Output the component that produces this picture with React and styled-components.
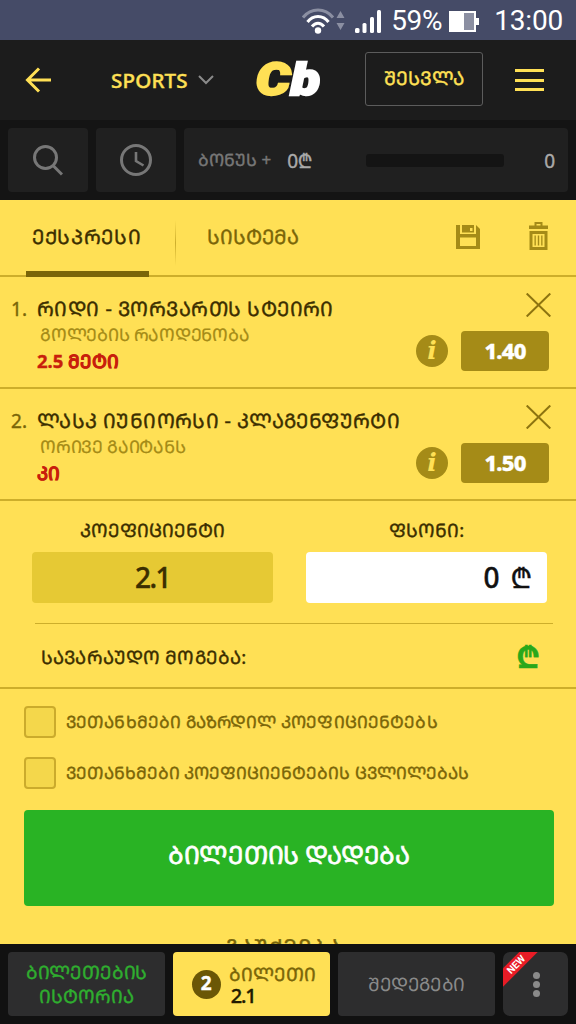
import React from "react";
import styled, { createGlobalStyle } from "styled-components";

const ink = "#3b2e00";
const olive = "#7a6508";
const gold = "#a58b17";
const yellow = "#ffe055";
const rule = "#cdae2b";

// Georgian labels are set in the Mtavruli (capital) alphabet.
const caps = (text) => text.toUpperCase();

const GlobalStyle = createGlobalStyle`
  *, *::before, *::after { box-sizing: border-box; }
  body {
    margin: 0;
    background: #111;
    font-family: "Noto Sans", "DejaVu Sans", sans-serif;
  }
  svg { display: block; flex: none; }
`;

const Label = styled.span`
  display: block;
  white-space: nowrap;
  font-size: ${(p) => p.$size || 20}px;
  line-height: ${(p) => p.$line || 24}px;
  font-weight: ${(p) => p.$weight || 400};
  letter-spacing: ${(p) => p.$track || 0}px;
  color: ${(p) => p.$color || ink};
  -webkit-text-stroke: ${(p) => p.$stroke ?? 0.4}px currentColor;
`;

const Screen = styled.main`
  width: 576px;
  height: 1024px;
  overflow: hidden;
  display: flex;
  flex-direction: column;
`;

const StatusBar = styled.div`
  height: 40px;
  flex: none;
  display: flex;
  align-items: center;
  justify-content: flex-end;
  gap: 9px;
  padding: 2px 13px 0 0;
  background: #454b67;
  color: #fff;
  font-family: Roboto, sans-serif;
  font-size: 28px;
  line-height: 38px;
`;

const Percent = styled.span`
  margin-right: -2px;
  letter-spacing: -0.3px;
`;

const Clock = styled.span`
  margin-left: 5px;
  letter-spacing: -0.2px;
`;

const Header = styled.header`
  height: 80px;
  flex: none;
  display: flex;
  align-items: center;
  padding: 0 32px 0 25px;
  background: #1c1c1c;
`;

const SportMenu = styled.div`
  display: flex;
  align-items: center;
  gap: 10px;
  margin-left: 59px;
`;

const Logo = styled.div`
  display: flex;
  width: 70px;
  margin-left: 42px;
  font: italic 900 44px/60px Roboto, sans-serif;
  letter-spacing: 0.5px;
  color: #fff;
  -webkit-text-stroke: 2.4px currentColor;
  transform: scaleX(1.22);
  transform-origin: left;
`;

const LogoLead = styled.span`
  color: ${yellow};
`;

const LoginButton = styled.button`
  width: 118px;
  height: 54px;
  margin: -3px 0 0 39px;
  padding: 0 0 2px;
  display: flex;
  align-items: center;
  justify-content: center;
  background: none;
  border: 1.5px solid #5c5c5c;
  border-radius: 3px;
  font-family: inherit;
`;

const Burger = styled.div`
  width: 29px;
  height: 22px;
  margin-left: auto;
  display: flex;
  flex-direction: column;
  justify-content: space-between;
`;

const BurgerLine = styled.i`
  height: 3px;
  background: ${yellow};
`;

const ToolBar = styled.div`
  height: 80px;
  flex: none;
  display: flex;
  gap: 8px;
  padding: 8px;
  background: #141414;
`;

const ToolTile = styled.div`
  width: 80px;
  height: 64px;
  display: flex;
  align-items: center;
  justify-content: center;
  background: #202020;
  border-radius: 4px;
`;

const BonusTile = styled(ToolTile)`
  width: 384px;
  justify-content: flex-start;
  padding: 0 13px 0 14px;
`;

const BonusAmount = styled.div`
  margin: 2px 0 0 16px;
`;

const BonusTrack = styled.div`
  width: 138px;
  height: 13px;
  margin-left: auto;
  margin-right: 40px;
  background: #141414;
  border-radius: 3px;
`;

const BonusCount = styled.div`
  margin-top: 2px;
`;

const Slip = styled.section`
  height: 744px;
  flex: none;
  overflow: hidden;
  background: ${yellow};
`;

const Tabs = styled.div`
  height: 77px;
  display: flex;
  padding-left: 26px;
  border-bottom: 2px solid ${rule};
`;

const Tab = styled.div`
  width: ${(p) => p.$width}px;
  height: 77px;
  padding: 25px 0 0 6px;
  border-bottom: ${(p) => (p.$active ? "6px solid #7a6508" : "0")};
`;

const TabDivider = styled.i`
  width: 1px;
  height: 46px;
  margin: 20px 25px 0 26px;
  background: linear-gradient(rgba(205, 174, 43, 0), ${rule}, rgba(205, 174, 43, 0));
`;

const TabActions = styled.div`
  display: flex;
  align-items: flex-end;
  gap: 49px;
  height: 50px;
  margin-left: auto;
  padding-right: 28px;
`;

const Bet = styled.article`
  height: 112px;
  display: flex;
  padding: 19px 25px 0 11px;
  border-bottom: 2px solid ${rule};
`;

const BetIndex = styled.div`
  width: 26px;
  flex: none;
`;

const BetText = styled.div`
  flex: 1;
`;

const BetMarket = styled.div`
  padding: 0 0 2px 3px;
`;

const BetSide = styled.div`
  display: flex;
  flex-direction: column;
  align-items: flex-end;
  gap: 14px;
  margin-top: -3px;
`;

const BetOdds = styled.div`
  display: flex;
  align-items: center;
  gap: 13px;
  padding-right: 2px;
`;

const InfoBadge = styled.div`
  width: 32px;
  height: 32px;
  border-radius: 50%;
  background: ${gold};
  color: ${yellow};
  font: italic 700 25px/31px "DejaVu Serif", serif;
  text-align: center;
`;

const OddsBox = styled.div`
  width: 88px;
  height: 40px;
  padding-bottom: 3px;
  display: flex;
  align-items: center;
  justify-content: center;
  background: ${gold};
  border-radius: 4px;
`;

const StakeRow = styled.div`
  height: 122px;
  display: flex;
  justify-content: space-between;
  padding: 17px 29px 0 32px;
`;

const StakeColumn = styled.div`
  width: 241px;
  display: flex;
  flex-direction: column;
  align-items: center;
  gap: 10px;
`;

const StakeBox = styled.div`
  width: 241px;
  height: 51px;
  padding: 0 ${(p) => (p.$input ? 15 : 0)}px 2px 0;
  display: flex;
  align-items: center;
  justify-content: ${(p) => (p.$input ? "flex-end" : "center")};
  gap: 11px;
  background: ${(p) => (p.$input ? "#fff" : "#e6c934")};
  border-radius: 4px;
`;

const WinRow = styled.div`
  height: 64px;
  margin-left: 35px;
  margin-right: 23px;
  display: flex;
  align-items: center;
  justify-content: space-between;
  padding: 2px 13px 0 6px;
  border-top: 1px solid ${rule};
`;

const Agreements = styled.div`
  height: 123px;
  display: flex;
  flex-direction: column;
  gap: 19px;
  padding: 17px 24px 0;
  border-top: 2px solid ${rule};
`;

const Agreement = styled.label`
  display: flex;
  align-items: center;
  gap: 10px;
`;

const Checkbox = styled.span`
  width: 32px;
  height: 32px;
  background: #f4d74b;
  border: 2px solid #cbab2c;
  border-radius: 4px;
`;

const PlaceButton = styled.button`
  width: 530px;
  height: 96px;
  margin: 0 0 0 24px;
  padding: 0 0 9px;
  display: flex;
  align-items: center;
  justify-content: center;
  background: #29b324;
  border: 0;
  border-radius: 4px;
  font-family: inherit;
`;

const ShareLink = styled.div`
  display: flex;
  justify-content: center;
  padding: 28px 9px 0 0;
`;

const BottomNav = styled.nav`
  height: 80px;
  flex: none;
  display: flex;
  gap: 8px;
  padding: 8px;
  background: #111;
`;

const NavTile = styled.div`
  position: relative;
  width: ${(p) => p.$width || 157}px;
  height: 64px;
  padding-left: ${(p) => (p.$row ? 5 : 0)}px;
  overflow: hidden;
  display: flex;
  flex-direction: ${(p) => (p.$row ? "row" : "column")};
  align-items: center;
  justify-content: center;
  background: ${(p) => (p.$active ? yellow : "#2d2d2e")};
  border-radius: ${(p) => p.$radius || 4}px;
`;

const CountBadge = styled.div`
  width: 29px;
  height: 29px;
  margin-right: 8px;
  display: flex;
  justify-content: center;
  background: #6b5706;
  border-radius: 50%;
`;

const CountTotal = styled.div`
  padding-left: 2px;
`;

const NewRibbon = styled.div`
  position: absolute;
  left: -17px;
  top: 6px;
  width: 60px;
  height: 13px;
  background: #e81c26;
  color: #fff;
  font: 700 10px/13px Roboto, sans-serif;
  text-align: center;
  transform: rotate(-45deg);
`;

const Dots = styled.div`
  display: flex;
  flex-direction: column;
  gap: 2px;
  margin-left: 1px;
`;

const Dot = styled.i`
  width: 7px;
  height: 7px;
  border-radius: 50%;
  background: #8a8a8a;
`;

const BETS = [
  { title: "რიდი - ვორვართს სტეირი", track: 0.45, market: "გოლების რაოდენობა", pick: "2.5 მეტი", odds: "1.40" },
  { title: "ლასკ იუნიორსი - კლაგენფურტი", track: 0.37, market: "ორივე გაიტანს", pick: "კი", odds: "1.50" },
];

function WifiIcon() {
  return (
    <svg width="44" height="27" viewBox="0 0 44 27" fill="none" strokeWidth="3">
      <path d="M1 9.500C9-.5 23-.5 31 9.500" stroke="#8b8fa2" />
      <path d="M5.500 14C11 6.500 21 6.500 26.500 14M10 18.500c3.500-4.500 8.500-4.500 12 0" stroke="#fff" />
      <circle cx="16" cy="22.500" r="3.200" fill="#fff" />
      <path d="M38.500 3l4 7h-8zM38.500 22l4-7h-8z" fill="#8b8fa2" />
    </svg>
  );
}

function SignalIcon() {
  return (
    <svg width="27" height="24" viewBox="0 0 27 24" fill="#fff">
      <rect y="19" width="4.500" height="5" rx="1.500" />
      <rect x="7.500" y="14" width="4" height="10" rx="1.500" />
      <rect x="15" y="8" width="4" height="16" rx="1.500" />
      <rect x="22" y="1" width="4" height="23" rx="1.500" />
    </svg>
  );
}

function BatteryIcon() {
  return (
    <svg width="31" height="21" viewBox="0 0 31 21">
      <rect x="1" y="1" width="25" height="19" fill="#8b8fa2" stroke="#fff" strokeWidth="2" />
      <path d="M1 1h14v19H1z" fill="#fff" />
      <path d="M27 7h3v7h-3z" fill="#fff" />
    </svg>
  );
}

function SaveIcon() {
  return (
    <svg width="24" height="25" viewBox="0 0 24 25" fill={gold}>
      <path fillRule="evenodd" d="M0 0h4v9h16V0l4 4v20H0zM4 12.500V21h16v-8.500z" />
      <path fillRule="evenodd" d="M6 0h12v7.500H6zM14 3v3h2.500V3z" />
    </svg>
  );
}

function TrashIcon() {
  return (
    <svg width="19" height="28" viewBox="0 0 19 28" fill={gold}>
      <path fillRule="evenodd" d="M5.500 0h8v3.500H19V7H0V3.500h5.500zM7.500 2v1.500h4V2z" />
      <path fillRule="evenodd" d="M.5 9h18v19H.5zM3.500 12v13h12V12z" />
      <path d="M5.500 13.500h1.300v10H5.500zM8.800 13.500h1.400v10H8.800zM12.200 13.500h1.300v10h-1.300z" />
    </svg>
  );
}

function BetRow({ index, bet }) {
  return (
    <Bet>
      <BetIndex><Label $size={19} $line={26} $color={olive}>{index}.</Label></BetIndex>
      <BetText>
        <Label $line={26} $track={bet.track}>{caps(bet.title)}</Label>
        <BetMarket><Label $size={17.5} $track={-0.25} $stroke={0.2} $color={gold}>{caps(bet.market)}</Label></BetMarket>
        <Label $size={18.5} $line={26} $weight={700} $color="#c81e0c">{caps(bet.pick)}</Label>
      </BetText>
      <BetSide>
        <svg width="25" height="24" viewBox="0 0 25 24" stroke="#8d7410" strokeWidth="2">
          <path d="M.7.500l23.600 23M24.300.500L.7 23.500" />
        </svg>
        <BetOdds>
          <InfoBadge>i</InfoBadge>
          <OddsBox><Label $size={22} $weight={800} $track={-0.8} $color="#fff">{bet.odds}</Label></OddsBox>
        </BetOdds>
      </BetSide>
    </Bet>
  );
}

export default function App() {
  return (
    <Screen>
      <GlobalStyle />
      <StatusBar>
        <WifiIcon />
        <SignalIcon />
        <Percent>59%</Percent>
        <BatteryIcon />
        <Clock>13:00</Clock>
      </StatusBar>

      <Header>
        <svg width="27" height="26" viewBox="0 0 27 26" fill="none" stroke={yellow} strokeWidth="3">
          <path d="M14 1.500L2.500 13 14 24.500M2.500 13H26" />
        </svg>
        <SportMenu>
          <Label $size={20.5} $weight={500} $track={0.2} $color={yellow}>SPORTS</Label>
          <svg width="16" height="10" viewBox="0 0 16 10" fill="none" stroke="#8a8a8a" strokeWidth="2">
            <path d="M1 1l7 7 7-7" />
          </svg>
        </SportMenu>
        <Logo><LogoLead>C</LogoLead>b</Logo>
        <LoginButton><Label $size={19} $color={yellow}>{caps("შესვლა")}</Label></LoginButton>
        <Burger><BurgerLine /><BurgerLine /><BurgerLine /></Burger>
      </Header>

      <ToolBar>
        <ToolTile>
          <svg width="30" height="31" viewBox="0 0 30 31" fill="none" stroke="#777" strokeWidth="3">
            <circle cx="12.500" cy="12.500" r="11" />
            <path d="M20 20.500l9 9" />
          </svg>
        </ToolTile>
        <ToolTile>
          <svg width="32" height="32" viewBox="0 0 32 32" fill="none" stroke="#777" strokeWidth="3">
            <circle cx="16" cy="16" r="14.500" />
            <path d="M16 8v9l7.500 4.500" strokeWidth="2.600" />
          </svg>
        </ToolTile>
        <BonusTile>
          <Label $size={17} $color="#777">{caps("ბონუს")} +</Label>
          <BonusAmount><Label $size={19} $color="#aaa" $track={-0.2}>0₾</Label></BonusAmount>
          <BonusTrack />
          <BonusCount><Label $size={19} $color="#aaa">0</Label></BonusCount>
        </BonusTile>
      </ToolBar>

      <Slip>
        <Tabs>
          <Tab $width={123} $active><Label $track={0.65}>{caps("ექსპრესი")}</Label></Tab>
          <TabDivider />
          <Tab $width={110}><Label $color={olive}>{caps("სისტემა")}</Label></Tab>
          <TabActions><SaveIcon /><TrashIcon /></TabActions>
        </Tabs>

        {BETS.map((bet, i) => <BetRow key={bet.title} index={i + 1} bet={bet} />)}

        <StakeRow>
          <StakeColumn>
            <Label $size={18.5} $track={0.05}>{caps("კოეფიციენტი")}</Label>
            <StakeBox><Label $size={28} $weight={500} $track={-1.5}>2.1</Label></StakeBox>
          </StakeColumn>
          <StakeColumn>
            <Label $size={18.5} $track={0.15}>{caps("ფსონი:")}</Label>
            <StakeBox $input>
              <Label $size={28} $weight={500} $color="#111">0</Label>
              <Label $size={28} $color="#111">₾</Label>
            </StakeBox>
          </StakeColumn>
        </StakeRow>

        <WinRow>
          <Label $size={18.5} $track={0.15}>{caps("სავარაუდო მოგება:")}</Label>
          <Label $size={30} $weight={700} $color="#29a81a">₾</Label>
        </WinRow>

        <Agreements>
          <Agreement>
            <Checkbox />
            <Label $size={17} $track={0.12} $color={olive}>{caps("ვეთანხმები გაზრდილ კოეფიციენტებს")}</Label>
          </Agreement>
          <Agreement>
            <Checkbox />
            <Label $size={17} $track={0} $color={olive}>{caps("ვეთანხმები კოეფიციენტების ცვლილებას")}</Label>
          </Agreement>
        </Agreements>

        <PlaceButton><Label $size={25} $track={-0.25} $stroke={0.7} $color="#fff">{caps("ბილეთის დადება")}</Label></PlaceButton>
        <ShareLink><Label $size={22} $track={0.9} $color={olive}>{caps("გაუქმება")}</Label></ShareLink>
      </Slip>

      <BottomNav>
        <NavTile>
          <Label $size={18.5} $track={-0.15} $color="#2fae2f">{caps("ბილეთების")}</Label>
          <Label $size={18.5} $track={0.05} $color="#2fae2f">{caps("ისტორია")}</Label>
        </NavTile>
        <NavTile $active $row>
          <CountBadge><Label $size={19} $line={27} $weight={700} $color="#fff">2</Label></CountBadge>
          <div>
            <Label $size={18.5} $line={23} $track={0.1} $color={olive}>{caps("ბილეთი")}</Label>
            <CountTotal><Label $size={20} $line={22} $track={-1.2} $weight={500} $color="#221a00">2.1</Label></CountTotal>
          </div>
        </NavTile>
        <NavTile>
          <Label $size={18.5} $track={-0.35} $stroke={0} $color="#8a8a8a">{caps("შედეგები")}</Label>
        </NavTile>
        <NavTile $width={65} $radius={7}>
          <NewRibbon>NEW</NewRibbon>
          <Dots><Dot /><Dot /><Dot /></Dots>
        </NavTile>
      </BottomNav>
    </Screen>
  );
}
